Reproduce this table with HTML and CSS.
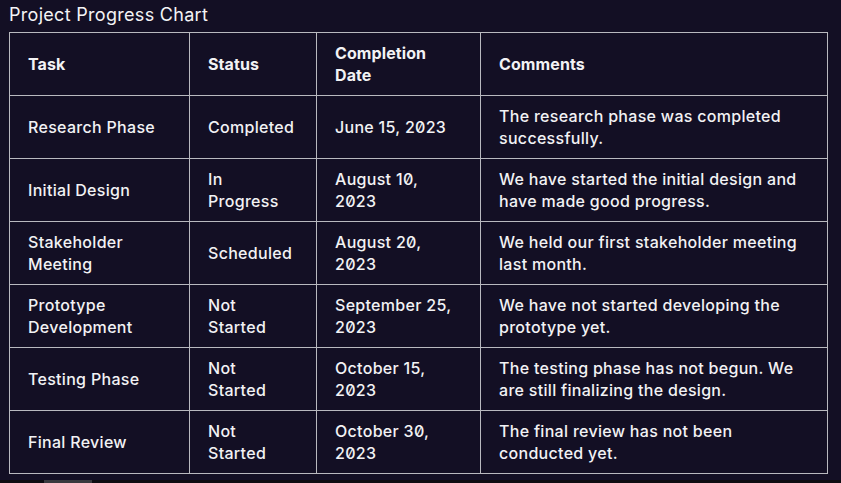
FILE: index.html
```html
<!DOCTYPE html>
<html>
<head>
<meta charset="utf-8">
<link rel="stylesheet" href="styles.css">
</head>
<body>
<div class="page">
  <h1 class="title">Project Progress Chart</h1>
  <table class="chart">
    <colgroup>
      <col class="c1"><col class="c2"><col class="c3"><col class="c4">
    </colgroup>
    <thead>
      <tr><th>Task</th><th>Status</th><th>Completion Date</th><th>Comments</th></tr>
    </thead>
    <tbody>
      <tr><td>Research Phase</td><td>Completed</td><td>June 15, 2023</td><td>The research phase was completed successfully.</td></tr>
      <tr><td>Initial Design</td><td>In Progress</td><td>August 10, 2023</td><td>We have started the initial design and have made good progress.</td></tr>
      <tr><td>Stakeholder Meeting</td><td>Scheduled</td><td>August 20, 2023</td><td>We held our first stakeholder meeting last month.</td></tr>
      <tr><td>Prototype Development</td><td>Not Started</td><td>September 25, 2023</td><td>We have not started developing the prototype yet.</td></tr>
      <tr><td>Testing Phase</td><td>Not Started</td><td>October 15, 2023</td><td>The testing phase has not begun. We are still finalizing the design.</td></tr>
      <tr><td>Final Review</td><td>Not Started</td><td>October 30, 2023</td><td>The final review has not been conducted yet.</td></tr>
    </tbody>
  </table>
</div>
<div class="scrollbar"><div class="thumb"></div></div>
</body>
</html>
```
FILE: styles.css
```css
html, body {
  margin: 0;
  padding: 0;
  background: #130f24;
  height: 100%;
  overflow: hidden;
}
body {
  font-family: Inter, "Noto Sans", sans-serif;
  font-feature-settings: "zero" 1;
  color: #f2f2f4;
  position: relative;
}
.page {
  padding: 3px 0 0 9px;
}
.title {
  margin: 0 0 5px 0;
  font-size: 18px;
  line-height: 24px;
  font-weight: 400;
  letter-spacing: 0.3px;
  font-feature-settings: normal;
  color: #f4f4f6;
}
.chart {
  border-collapse: collapse;
  border: 1px solid #b9b9bf;
  width: 818px;
  table-layout: fixed;
}
.c1 { width: 180px; }
.c2 { width: 127px; }
.c3 { width: 164px; }
.c4 { width: 347px; }
.chart th, .chart td {
  border: 1px solid #b9b9bf;
  padding: 9px 21px 9px 18px;
  font-size: 16px;
  line-height: 22px;
  text-align: left;
  vertical-align: middle;
  height: 44px;
}
.chart th {
  font-weight: 700;
  letter-spacing: 0.1px;
}
.chart td {
  font-weight: 500;
  letter-spacing: 0.3px;
}
.scrollbar {
  position: absolute;
  left: 0;
  right: 0;
  bottom: 0;
  height: 3px;
  background: #0e0d12;
}
.thumb {
  position: absolute;
  left: 44px;
  width: 48px;
  top: 0;
  bottom: 0;
  background: #3a3a3f;
}
```
